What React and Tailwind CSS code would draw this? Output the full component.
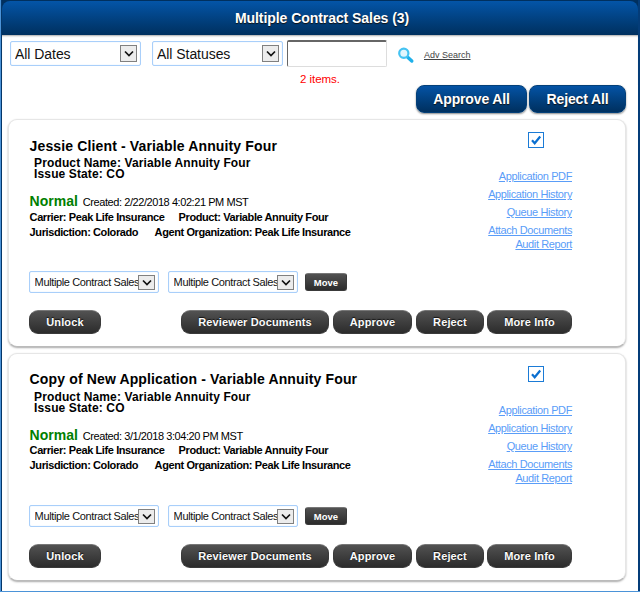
import React from "react";

const chevron = "M1 1.5 L5 5.5 L9 1.5";

function Select({ label, big, className }) {
  return (
    <div
      className={
        "flex shrink-0 items-center rounded-[2px] border border-[#a9cffa] bg-white shadow-[inset_0_0_1px_#a9cffa] " +
        (big ? "h-[25px] w-[131px] pl-[4px] pr-[3px] " : "h-[22px] w-[130px] pl-[4.6px] pr-[3px] ") +
        className
      }
    >
      <span
        className={
          "flex-1 overflow-hidden whitespace-nowrap text-[#111] " +
          (big ? "text-[14px] leading-[20px] tracking-[-0.05px]" : "text-[11px] leading-[14px] tracking-[-0.37px]")
        }
      >
        {label}
      </span>
      <span
        className={
          "flex shrink-0 items-center justify-center border border-[#808080] bg-[#ececec] " +
          (big ? "h-[17px] w-[17px]" : "h-[15px] w-[17px]")
        }
      >
        <svg width="10" height="7" viewBox="0 0 10 7">
          <path d={chevron} fill="none" stroke="#111" strokeWidth="1.7" />
        </svg>
      </span>
    </div>
  );
}

function DarkButton({ children, className }) {
  return (
    <button
      className={
        "flex h-[24px] shrink-0 items-center justify-center rounded-[9px] border border-[#3a3a3a] border-t-[#777] bg-linear-to-b from-[#525252] to-[#2c2c2c] font-bold whitespace-nowrap text-[#fafafa] text-[11px] tracking-[0.13px] [text-shadow:0_-1px_1px_#111] " +
        className
      }
    >
      {children}
    </button>
  );
}

function BlueButton({ children, className }) {
  return (
    <button
      className={
        "flex h-[28px] items-center justify-center rounded-[8px] border border-[#044079] bg-linear-to-b from-[#0453a5] to-[#00305f] text-[14px] font-bold tracking-[-0.15px] whitespace-nowrap text-white shadow-[0_1px_2px_#888] [text-shadow:0_1px_1px_#111] " +
        className
      }
    >
      {children}
    </button>
  );
}

function Link({ children, className }) {
  return (
    <a
      className={
        "block text-[11px] leading-[14px] tracking-[-0.38px] whitespace-nowrap text-[#5a9df8] underline " + className
      }
    >
      {children}
    </a>
  );
}

function Card({ title, titleClass, detailsClass, created, className }) {
  return (
    <section
      className={
        "ml-[6px] h-[228px] w-[618px] rounded-[9px] border border-[#e6e6e6] border-b-[#bbb] bg-white pl-[20px] shadow-[0_1px_2px_#aaa] " +
        className
      }
    >
      <div className="flex h-[153px] w-[543px] justify-between">
        <div className="pl-[0.6px] whitespace-nowrap">
          <h2 className={"text-[14px] leading-[20px] font-bold tracking-[0.14px] text-black " + titleClass}>{title}</h2>
          <div className="mt-[2px] pl-[4.5px] text-[12px] leading-[11px] font-bold tracking-[0.12px] text-black">
            <p>Product Name: Variable Annuity Four</p>
            <p>Issue State: CO</p>
          </div>
          <p className="mt-[12px] flex items-baseline leading-[18px] text-black">
            <span className="text-[14px] font-bold text-[#008000]">Normal</span>
            <span className="ml-[5px] text-[11px] tracking-[-0.43px]">{created}</span>
          </p>
          <div className={"text-[11px] leading-[15px] font-bold tracking-[-0.4px] text-black " + detailsClass}>
            <p className="flex">
              <span className="w-[149px]">Carrier: Peak Life Insurance</span>
              <span>Product: Variable Annuity Four</span>
            </p>
            <p className="flex">
              <span className="w-[125px]">Jurisdiction: Colorado</span>
              <span>Agent Organization: Peak Life Insurance</span>
            </p>
          </div>
        </div>
        <div className="flex flex-col items-end">
          <span className="mt-[12px] mr-[28px] flex h-[16px] w-[16px] items-center justify-center border border-[#1b7bd6] bg-white">
            <svg width="12" height="12" viewBox="0 0 12 12">
              <path d="M2 6.3 L4.7 9.3 L10.2 2.5" fill="none" stroke="#0a6fd0" strokeWidth="2.2" />
            </svg>
          </span>
          <Link className="mt-[21px]">Application PDF</Link>
          <Link className="mt-[4px]">Application History</Link>
          <Link className="mt-[4px]">Queue History</Link>
          <Link className="mt-[4px]">Attach Documents</Link>
          <Link>Audit Report</Link>
        </div>
      </div>
      <div className="-mt-[2px] flex items-center">
        <Select label="Multiple Contract Sales" />
        <Select label="Multiple Contract Sales" className="ml-[9px]" />
        <button className="ml-[7px] h-[18px] w-[42px] rounded-[3px] border border-[#3a3a3a] border-t-[#777] bg-linear-to-b from-[#525252] to-[#2c2c2c] text-[9.5px] leading-[15px] font-bold text-white">
          Move
        </button>
      </div>
      <div className="mt-[17px] flex w-[543px]">
        <DarkButton className="w-[72px]">Unlock</DarkButton>
        <div className="ml-auto flex">
          <DarkButton className="w-[148px]">Reviewer Documents</DarkButton>
          <DarkButton className="ml-[4px] w-[79px]">Approve</DarkButton>
          <DarkButton className="ml-[4px] w-[68px]">Reject</DarkButton>
          <DarkButton className="ml-[3px] w-[85px]">More Info</DarkButton>
        </div>
      </div>
    </section>
  );
}

export default function App() {
  return (
    <div className="h-[593px] w-[640px] overflow-hidden bg-white font-['Liberation_Sans',Arial,sans-serif]">
      <div className="h-[592px] border-b border-l border-[#4b93d8] bg-white">
        <div className="h-full border-r-2 border-l border-[#043668] border-r-[#043c78]">
          <div className="bg-[#00305f] pt-[1px]">
            <header className="flex h-[34px] items-center justify-center rounded-t-[8px] bg-linear-to-b from-[#0455a8] to-[#00305f] pl-[4px] text-[14px] font-bold tracking-[-0.06px] text-white [text-shadow:0_1px_1px_#111]">
              <span>Multiple Contract Sales (3)</span>
            </header>
          </div>
          <div className="flex h-[50px] items-start shadow-[inset_0_2px_2px_-1px_#aaa]">
            <Select big label="All Dates" className="mt-[6px] ml-[8px]" />
            <Select big label="All Statuses" className="mt-[6px] ml-[11px]" />
            <div className="ml-[4px] flex flex-col">
              <input className="mt-[5px] h-[27px] w-[100px] rounded-[2px] border border-t-2 border-[#ddd] border-t-[#666] border-l-[#666] bg-white" />
              <p className="mt-[4px] ml-[13px] text-[11.5px] leading-[16px] tracking-[-0.05px] text-[#ff0000]">2 items.</p>
            </div>
            <svg className="mt-[12px] ml-[10px]" width="18" height="17" viewBox="0 0 18 17">
              <path d="M10.7 10.2 L14.8 14" stroke="#1fb0ea" strokeWidth="3.4" strokeLinecap="round" />
              <circle cx="6.8" cy="6.2" r="4.6" fill="#e2f6fd" stroke="#45c3f2" strokeWidth="2.2" />
            </svg>
            <a className="mt-[14px] ml-[9px] text-[9px] leading-[12px] whitespace-nowrap text-[#444] underline">Adv Search</a>
          </div>
          <div className="flex h-[34px] justify-end gap-[2px] pr-[12px]">
            <BlueButton className="w-[111px]">Approve All</BlueButton>
            <BlueButton className="w-[97px]">Reject All</BlueButton>
          </div>
          <Card
            title="Jessie Client - Variable Annuity Four"
            titleClass="mt-[16px]"
            detailsClass="-mt-[1px]"
            created="Created: 2/22/2018 4:02:21 PM MST"
          />
          <Card
            className="mt-[6px]"
            title="Copy of New Application - Variable Annuity Four"
            titleClass="mt-[15px] mb-[3px]"
            detailsClass="-mt-[2px]"
            created="Created: 3/1/2018 3:04:20 PM MST"
          />
        </div>
      </div>
    </div>
  );
}
